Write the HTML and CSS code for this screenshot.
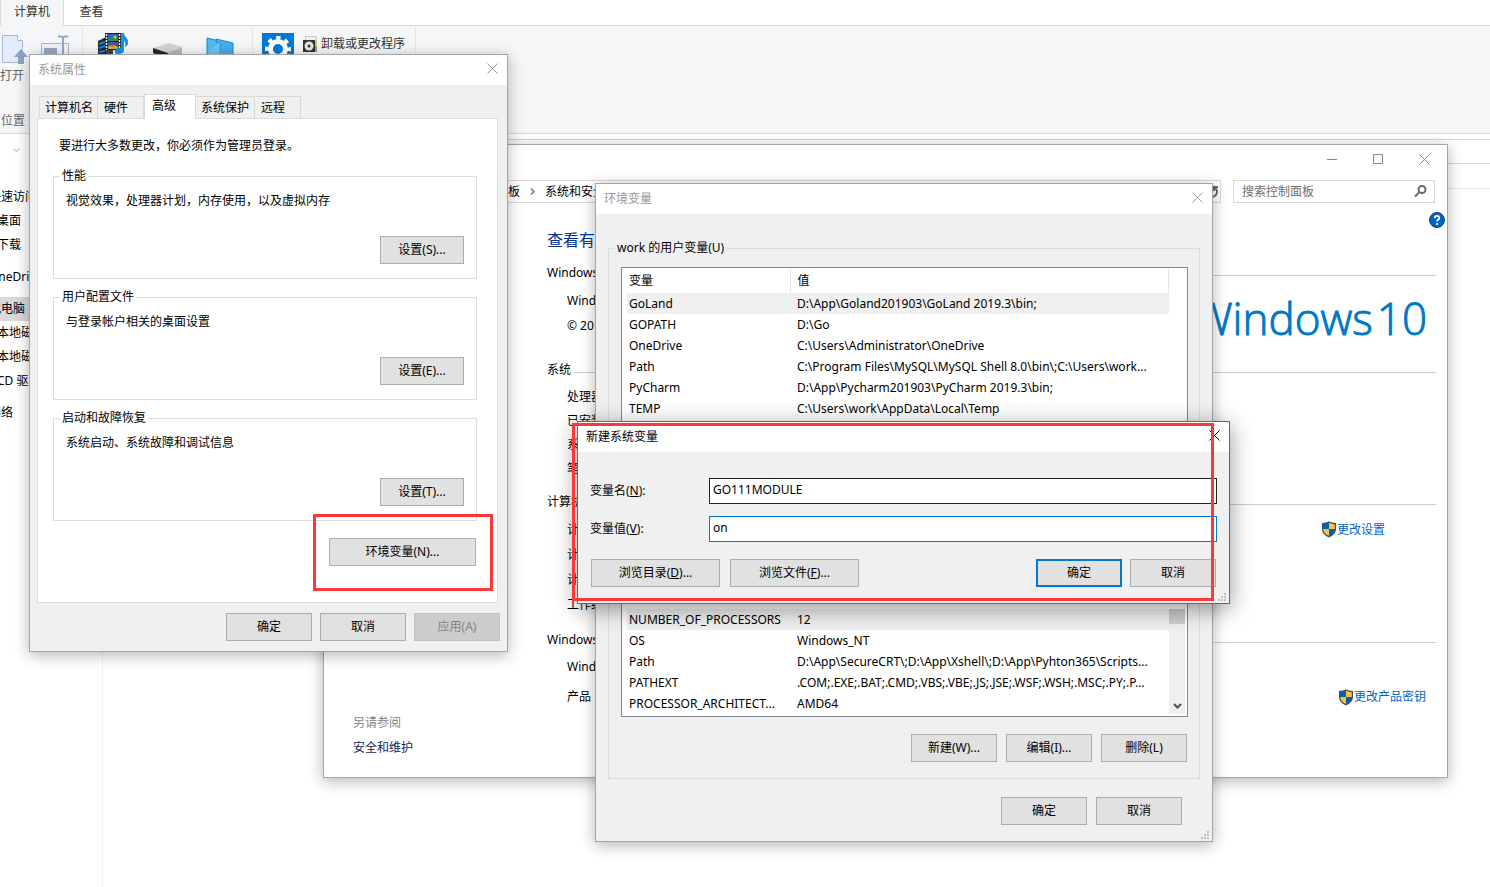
FILE: index.html
```html
<!DOCTYPE html>
<html lang="zh-CN">
<head>
<meta charset="utf-8">
<title>系统属性</title>
<link rel="stylesheet" href="styles.css">
</head>
<body>
<svg class="defs" aria-hidden="true">
  <symbol id="close" viewBox="0 0 11 11"><path d="M.5 .5l10 10M10.5 .5l-10 10" fill="none" stroke="currentColor"/></symbol>
  <symbol id="grip" viewBox="0 0 8 8"><path d="M6 0h2v2H6zM3 3h2v2H3zM6 3h2v2H6zM0 6h2v2H0zM3 6h2v2H3zM6 6h2v2H6z" fill="#bfbfbf"/></symbol>
  <symbol id="shield" viewBox="0 0 16 17">
    <path d="M8 .3C6 1.5 3.500 2 1 2v6c0 4 3 6.500 7 8.500 4-2 7-4.500 7-8.500V2C12.500 2 10 1.500 8 .3z" fill="#4a4f55"/>
    <path d="M8 1.600C6.300 2.600 4.300 3.100 2.200 3.200V8H8z" fill="#0063b8"/>
    <path d="M8 1.600c1.700 1 3.700 1.500 5.800 1.600V8H8z" fill="#ffc03c"/>
    <path d="M2.200 8H8v7.100C4.800 13.400 2.300 11.300 2.200 8z" fill="#ffc03c"/>
    <path d="M13.800 8H8v7.100c3.200-1.700 5.700-3.800 5.800-7.100z" fill="#0063b8"/>
  </symbol>
</svg>

<main class="desktop">
  <section class="explorer">
    <div class="ribbon-tabs">
      <button class="ribbon-tab ribbon-tab-on">计算机</button>
      <button class="ribbon-tab">查看</button>
    </div>
    <div class="ribbon">
      <div class="ribbon-group group-location">
        <div class="ribbon-icons">
          <svg width="28" height="34" viewBox="0 0 28 34">
            <path d="M2.500 3.500h15l5 5v22h-20z" fill="#e3ecf8" stroke="#a7b9d6"/><path d="M17.500 3.500v5h5" fill="#fff" stroke="#a7b9d6"/>
            <path d="M21 17l7 8h-4v7h-6v-7h-4z" fill="#8ea3c4"/>
          </svg>
          <svg width="30" height="34" viewBox="0 0 30 34">
            <path d="M1.500 11.500h27v14h-27z" fill="#edf2f9" stroke="#a9b8cf"/><path d="M4 16h13v6H4z" fill="#95a8c7"/>
            <path d="M18 4.500h3q2 0 2 2v23M28 4.500h-3q-2 0-2 2" fill="none" stroke="#95a8c7" stroke-width="2"/>
          </svg>
        </div>
        <span class="ribbon-label">打开</span>
        <span class="ribbon-title">位置</span>
      </div>
      <div class="ribbon-group group-network">
        <svg width="32" height="34" viewBox="0 0 32 34">
          <path d="M0 8l8-4v28l-8-3z" fill="#24292f"/><path d="M8 4h7v28H8z" fill="#3d454e"/>
          <path d="M1 11l6-2M1 15l6-2M1 19l6-1M1 23l6-1" stroke="#1683e0" stroke-width="2"/>
          <path d="M7 0h16v17H7z" fill="#1c1c1c"/><path d="M10 1h10v7H10z" fill="#2f67c9"/><path d="M10 9h10v7H10z" fill="#3a5ba8"/>
          <path d="M10 6l3-1 3-3 2 2 2 1v3H10z" fill="#2b8a57"/><circle cx="17" cy="4" r="1.500" fill="#f0b62c"/>
          <path d="M10 14l4-3 6 3v2H10z" fill="#c9b13c"/><circle cx="14" cy="12" r="1.500" fill="#d9442c"/>
          <path d="M8.500 1v16M21.500 1v16" stroke="#f2f2f2" stroke-width="1.500" stroke-dasharray="2 1"/>
          <path d="M23 0h3c0 4 5 5 4 11-1 2-2 3-3 3 1-4 0-5-1-6v9c0 3-3 4-6 4-5 0-4-6 1-6l2-.3z" fill="#1391e6"/>
        </svg>
        <svg width="32" height="34" viewBox="0 0 32 34"><path d="M1 15l16-5 13 4-14 6z" fill="#d4d4d4"/><path d="M1 15l15 5v7L1 20z" fill="#282828"/><path d="M16 20l14-6v8l-14 6z" fill="#b8b8b8"/></svg>
        <svg width="32" height="34" viewBox="0 0 32 34"><path d="M1 5l21 5v22L1 28z" fill="#55b9f2" stroke="#168bd1"/><path d="M10 6l17 4v22l-13-4V10l-4-1z" fill="#46aeea" stroke="#168bd1"/><path d="M1 19L14 9v19z" fill="#86d0fa" opacity=".5"/></svg>
      </div>
      <div class="ribbon-group group-system">
        <svg width="32" height="32" viewBox="0 0 32 32">
          <path d="M0 0h32v32H0z" fill="#0078d7"/>
          <circle cx="16" cy="16" r="11" fill="none" stroke="#fff" stroke-width="4" stroke-dasharray="4.320 4.320" stroke-dashoffset="2.160"/>
          <circle cx="16" cy="16" r="7.500" fill="none" stroke="#fff" stroke-width="5"/>
        </svg>
        <button class="ribbon-command">
          <svg width="16" height="18" viewBox="0 0 16 18"><path d="M3 1h11l1 4v12H4z" fill="#c8c7c0"/><path d="M4 2h9l1 3H4z" fill="#eee"/><path d="M12 6h3v5h-3z" fill="#f0b440"/><path d="M12 11h3v6h-3z" fill="#82aa6b"/><path d="M1 5h12v12H1z" fill="#333"/><circle cx="7" cy="11" r="4.500" fill="#e5e5e5"/><circle cx="7" cy="11" r="1.500" fill="#333"/></svg>
          卸载或更改程序
        </button>
      </div>
    </div>
    <div class="explorer-bar">
      <svg width="7" height="5" viewBox="0 0 7 5"><path d="M.5 .5l3 3 3-3" fill="none" stroke="#ccc" stroke-width="1.500"/></svg>
      <div class="explorer-address"></div>
    </div>
    <nav class="explorer-nav">
      <ul class="nav-list">
        <li>快速访问</li>
        <li class="nav-sub">桌面</li>
        <li class="nav-sub">下载</li>
        <li class="nav-gap">OneDri</li>
        <li class="nav-gap nav-on">此电脑</li>
        <li class="nav-sub">本地磁</li>
        <li class="nav-sub">本地磁</li>
        <li class="nav-sub">CD 驱</li>
        <li class="nav-gap">网络</li>
      </ul>
    </nav>
  </section>

  <section class="window system" aria-label="系统">
    <header class="system-bar">
      <button class="caption" aria-label="最小化"><svg width="11" height="11" viewBox="0 0 11 11"><path d="M0 5.500h10" stroke="#888"/></svg></button>
      <button class="caption" aria-label="最大化"><svg width="11" height="11" viewBox="0 0 11 11"><path d="M.5 .5h9v9h-9z" fill="none" stroke="#888"/></svg></button>
      <button class="caption" aria-label="关闭"><svg width="11" height="11"><use href="#close"/></svg></button>
    </header>
    <div class="system-address">
      <div class="crumbs">
        <span>板</span>
        <svg width="5" height="7" viewBox="0 0 5 7"><path d="M1 .5l3 3-3 3" fill="none" stroke="#777" stroke-width="1.500"/></svg>
        <span class="crumb-last">系统和安全</span>
        <svg width="14" height="14" viewBox="0 0 14 14"><path d="M9.500 2.500a5 5 0 1 1-5 0M9 6V2h4" fill="none" stroke="#666" stroke-width="2"/></svg>
      </div>
      <div class="search">
        <input type="search" placeholder="搜索控制面板" aria-label="搜索控制面板">
        <svg width="13" height="13" viewBox="0 0 13 13"><circle cx="8" cy="4.500" r="3.500" fill="none" stroke="#6a6a6a" stroke-width="2"/><path d="M5.500 7L1 11.500" stroke="#6a6a6a" stroke-width="2"/></svg>
      </div>
    </div>
    <div class="system-body">
      <aside class="system-side">
        <span class="muted">另请参阅</span>
        <a class="side-link" href="#">安全和维护</a>
      </aside>
      <article class="system-main">
        <div class="system-top">
          <h1>查看有</h1>
          <svg width="16" height="16" viewBox="0 0 16 16"><circle cx="8" cy="8" r="7.500" fill="#0063c4" stroke="#0b3d77"/><path d="M5.700 6.200C5.800 2.900 10.300 3.200 10.300 5.900 10.300 7.600 8.100 7.500 8.100 9.600M8.100 11v2" fill="none" stroke="#fff" stroke-width="1.800"/></svg>
        </div>
        <h2><span>Windows</span></h2>
        <div class="edition">
          <div class="edition-text"><p>Wind</p><p>© 20</p></div>
          <div class="logo"><span>Windows</span><span>10</span></div>
        </div>
        <h2><span>系统</span></h2>
        <div class="info info-system"><p>处理器</p><p>已安装</p><p>系</p><p>笔</p></div>
        <h2><span>计算机</span></h2>
        <div class="info info-name">
          <div><p>计</p><p>计</p><p>计</p><p>工作组</p></div>
          <a class="shield-link" href="#"><svg width="16" height="17"><use href="#shield"/></svg>更改设置</a>
        </div>
        <h2><span>Windows</span></h2>
        <div class="info info-activate"><p>Wind</p></div>
        <div class="info info-product">
          <p>产品</p>
          <a class="shield-link" href="#"><svg width="16" height="17"><use href="#shield"/></svg>更改产品密钥</a>
        </div>
      </article>
    </div>
  </section>

  <section class="window dialog props" aria-label="系统属性">
    <header class="title"><span>系统属性</span><button class="x" aria-label="关闭"><svg width="11" height="11"><use href="#close"/></svg></button></header>
    <div class="props-body">
      <div class="tabs" role="tablist">
        <button class="tab tab-a" role="tab">计算机名</button><button class="tab tab-b" role="tab">硬件</button><button class="tab tab-on" role="tab" aria-selected="true">高级</button><button class="tab tab-a" role="tab">系统保护</button><button class="tab tab-b" role="tab">远程</button>
      </div>
      <div class="panel" role="tabpanel">
        <p class="lead">要进行大多数更改，你必须作为管理员登录。</p>
        <fieldset class="frame"><legend>性能</legend><p>视觉效果，处理器计划，内存使用，以及虚拟内存</p><button class="btn">设置(S)...</button></fieldset>
        <fieldset class="frame"><legend>用户配置文件</legend><p>与登录帐户相关的桌面设置</p><button class="btn">设置(E)...</button></fieldset>
        <fieldset class="frame"><legend>启动和故障恢复</legend><p>系统启动、系统故障和调试信息</p><button class="btn">设置(T)...</button></fieldset>
        <button class="btn btn-env">环境变量(N)...</button>
      </div>
      <footer class="props-foot"><button class="btn">确定</button><button class="btn">取消</button><button class="btn" disabled>应用(A)</button></footer>
    </div>
  </section>

  <section class="window dialog env" aria-label="环境变量">
    <header class="title"><span>环境变量</span><button class="x" aria-label="关闭"><svg width="11" height="11"><use href="#close"/></svg></button></header>
    <div class="env-body">
      <fieldset class="vars vars-user">
        <legend>work 的用户变量(U)</legend>
        <div class="list list-user">
          <table>
            <thead><tr><th class="col-name">变量</th><th>值</th></tr></thead>
            <tbody>
              <tr class="row-on"><td>GoLand</td><td>D:\App\Goland201903\GoLand 2019.3\bin;</td></tr>
              <tr><td>GOPATH</td><td>D:\Go</td></tr>
              <tr><td>OneDrive</td><td>C:\Users\Administrator\OneDrive</td></tr>
              <tr><td>Path</td><td>C:\Program Files\MySQL\MySQL Shell 8.0\bin\;C:\Users\work...</td></tr>
              <tr><td>PyCharm</td><td>D:\App\Pycharm201903\PyCharm 2019.3\bin;</td></tr>
              <tr><td>TEMP</td><td>C:\Users\work\AppData\Local\Temp</td></tr>
            </tbody>
          </table>
        </div>
      </fieldset>
      <fieldset class="vars vars-system">
        <div class="list">
          <table>
            <colgroup><col class="col-name"><col></colgroup>
            <tbody>
              <tr class="row-on"><td>NUMBER_OF_PROCESSORS</td><td>12</td></tr>
              <tr><td>OS</td><td>Windows_NT</td></tr>
              <tr><td>Path</td><td>D:\App\SecureCRT\;D:\App\Xshell\;D:\App\Pyhton365\Scripts...</td></tr>
              <tr><td>PATHEXT</td><td>.COM;.EXE;.BAT;.CMD;.VBS;.VBE;.JS;.JSE;.WSF;.WSH;.MSC;.PY;.P...</td></tr>
              <tr><td>PROCESSOR_ARCHITECT...</td><td>AMD64</td></tr>
            </tbody>
          </table>
          <div class="scroll"><div class="thumb"></div><svg width="9" height="6" viewBox="0 0 9 6"><path d="M1 1l3.500 3.500L8 1" fill="none" stroke="#505050" stroke-width="2"/></svg></div>
        </div>
        <div class="actions"><button class="btn">新建(W)...</button><button class="btn">编辑(I)...</button><button class="btn">删除(L)</button></div>
      </fieldset>
      <footer class="env-foot"><button class="btn">确定</button><button class="btn">取消</button></footer>
    </div>
    <svg class="grip" width="8" height="8"><use href="#grip"/></svg>
  </section>

  <section class="window dialog newvar" aria-label="新建系统变量">
    <header class="title title-active"><span>新建系统变量</span><button class="x" aria-label="关闭"><svg width="11" height="11"><use href="#close"/></svg></button></header>
    <form class="newvar-body">
      <label for="var-name">变量名(<u>N</u>):</label><input id="var-name" type="text" value="GO111MODULE">
      <label for="var-value">变量值(<u>V</u>):</label><input id="var-value" class="focus" type="text" value="on">
      <div class="newvar-foot">
        <button type="button" class="btn btn-browse">浏览目录(<u>D</u>)...</button><button type="button" class="btn btn-browse">浏览文件(<u>F</u>)...</button>
        <button type="button" class="btn btn-default">确定</button><button type="button" class="btn">取消</button>
      </div>
    </form>
    <svg class="grip" width="8" height="8"><use href="#grip"/></svg>
  </section>

  <div class="mark mark-button"></div>
  <div class="mark mark-dialog"></div>
</main>
</body>
</html>
```
FILE: styles.css
```css
* { box-sizing: border-box; }
body {
  margin: 0;
  overflow: hidden;
  background: #fff;
  color: #000;
  font: 12px/16px "Noto Sans", "Noto Sans CJK SC", sans-serif;
}
button, input { font: inherit; color: inherit; }
button { padding: 0; border: 0; background: none; white-space: nowrap; }
p, h1, h2, ul { margin: 0; padding: 0; font-size: inherit; font-weight: normal; white-space: nowrap; }
ul { list-style: none; }
svg { display: block; flex: none; }
a { text-decoration: none; }
.defs { position: absolute; width: 0; height: 0; }
.desktop { position: relative; min-height: 100vh; overflow: hidden; }

/* File explorer in the background */
.explorer { display: flex; flex-direction: column; min-height: 100vh; }
.ribbon-tabs { display: flex; border-bottom: 1px solid #dadbdc; height: 26px; }
.ribbon-tab { width: 55px; padding-bottom: 2px; color: #333; }
.ribbon-tab-on { width: 64px; margin-bottom: -1px; background: #f5f6f7; border: 1px solid #dadbdc; border-width: 0 1px; }
.ribbon { display: flex; height: 108px; padding: 2px 0 4px; background: #f5f6f7; border-bottom: 1px solid #dadbdc; }
.ribbon-group { border-right: 1px solid #e2e3e4; color: #666; }
.group-location { display: flex; flex-direction: column; width: 83px; padding-top: 4px; }
.ribbon-icons { display: flex; gap: 12px; height: 36px; }
.ribbon-label { padding-bottom: 29px; }
.ribbon-title { padding-left: 1px; }
.group-network { display: flex; gap: 22px; width: 170px; padding: 5px 0 0 15px; }
.group-system { display: flex; gap: 8px; width: 163px; padding: 5px 0 0 9px; }
.ribbon-command { display: flex; align-items: center; align-self: flex-start; gap: 3px; height: 22px; color: #333; }
.explorer-bar { display: flex; align-items: flex-start; gap: 20px; height: 55px; padding-left: 13px; }
.explorer-bar svg { margin-top: 14px; }
.explorer-address { flex: 1; height: 55px; margin-top: 0; padding-top: 5px; border-bottom: 1px solid #e5e5e5; }
.explorer-address::before { content: ""; display: block; height: 23px; border: 1px solid #d9d9d9; border-width: 1px 0; }
.explorer-nav { flex: 1; width: 103px; border-right: 1px solid #f0f0f0; overflow: hidden; }
.nav-list { display: flex; flex-direction: column; margin: -4px 0 0 -11px; }
.nav-list li { line-height: 24px; }
.nav-list .nav-sub { padding-left: 8px; }
.nav-list .nav-gap { margin-top: 8px; }
.nav-list .nav-on { background: #d9d9d9; }

/* Windows */
.window { position: absolute; background: #fff; border: 1px solid #a5a5a5; box-shadow: 0 3px 14px rgba(0, 0, 0, .3); }
.dialog { background: #f0f0f0; }
.title { display: flex; align-items: center; justify-content: space-between; height: 30px; padding: 0 9px 0 8px; background: #fff; color: #999; }
.title-active { color: #000; }
.x { padding-bottom: 3px; }
.btn { width: 86px; height: 28px; background: #e1e1e1; border: 1px solid #adadad; }
.btn:disabled { background: #ccc; border-color: #bfbfbf; color: #838383; }
.grip { position: absolute; right: 3px; bottom: 2px; }

/* System window */
.system { top: 144px; left: 323px; right: 42px; display: flex; flex-direction: column; }
.system-bar { display: flex; justify-content: flex-end; height: 35px; }
.caption { display: flex; justify-content: center; align-items: center; width: 46px; height: 28px; color: #888; }
.system-address { display: flex; gap: 12px; padding-right: 12px; }
.crumbs { display: flex; flex: 1; align-items: center; gap: 10px; height: 23px; margin-left: 40px; padding: 0 1px 0 143px; border: 1px solid #d9d9d9; }
.crumb-last { flex: 1; }
.search { display: flex; align-items: center; width: 202px; height: 23px; padding: 0 7px 0 8px; border: 1px solid #d9d9d9; }
.search input { flex: 1; min-width: 0; padding: 0; border: 0; outline: 0; background: none; }
.search input::placeholder { color: #6d6d6d; opacity: 1; }
.system-body { display: flex; padding-bottom: 20px; }
.system-side { display: flex; flex-direction: column; justify-content: flex-end; gap: 9px; width: 223px; padding: 0 0 1px 29px; }
.muted { color: #838383; }
.side-link { color: #151c55; }
.system-main { flex: 1; padding-right: 11px; }
.system-top { display: flex; justify-content: space-between; height: 62px; margin-right: -9px; padding-top: 9px; }
.system-top h1 { padding-top: 16px; color: #039; font-size: 16px; line-height: 24px; }
h2 { display: flex; gap: 3px; line-height: 16px; }
h2::after { content: ""; flex: 1; height: 1px; margin-top: 10px; background: #ccc; }
.edition { display: flex; justify-content: space-between; height: 81px; padding: 7px 9px 0 20px; }
.edition-text { line-height: 25px; }
.logo {
  display: flex;
  gap: 4px;
  padding-top: 6px;
  color: #0078c8;
  font-family: "Open Sans", sans-serif;
  font-size: 44px;
  font-weight: 300;
  line-height: 48px;
  -webkit-text-stroke: 1px #0078c8;
}
.info { display: flex; justify-content: space-between; padding-left: 20px; }
.info-system { flex-direction: column; padding-top: 7px; padding-bottom: 13px; line-height: 24px; }
.info-name { padding-top: 7px; padding-right: 51px; padding-bottom: 15px; line-height: 25px; }
.info-activate { padding-top: 11px; }
.info-product { padding: 14px 10px 0 20px; margin-bottom: 52px; }
.shield-link { display: flex; align-items: center; align-self: flex-start; height: 24px; color: #06c; }
.info-product .shield-link { height: 16px; }

/* System properties */
.props { top: 54px; left: 29px; width: 479px; }
.props-body { padding: 9px 9px 10px 7px; }
.tabs { display: flex; align-items: flex-end; padding-left: 2px; }
.tab { height: 22px; background: #f0f0f0; border: 1px solid #d9d9d9; border-bottom: 0; border-left-width: 0; text-align: left; }
.tab:first-child { border-left-width: 1px; }
.tab-a { width: 59px; padding-left: 5px; }
.tab-b { width: 46px; padding-left: 6px; }
.tab-on { width: 52px; height: 25px; margin-bottom: -1px; padding: 0 0 2px 7px; background: #fff; border-left-width: 1px; }
.panel { display: flex; flex-direction: column; gap: 10px; padding: 19px 20px 36px 15px; background: #fff; border: 1px solid #dcdcdc; }
.lead { padding: 0 0 4px 6px; }
fieldset { min-width: 0; margin: 0; border: 1px solid #dcdcdc; }
legend { padding: 0 2px; line-height: 16px; }
.frame { display: flex; flex-direction: column; padding: 9px 12px 14px; }
.frame legend { margin-left: -6px; }
.frame .btn { width: 84px; margin-top: 27px; align-self: flex-end; }
.btn.btn-env { width: 147px; margin: 7px 1px 0 0; align-self: flex-end; }
.props-foot { display: flex; justify-content: flex-end; gap: 8px; padding-top: 10px; margin-right: -2px; }

/* Environment variables */
.env { top: 183px; left: 595px; width: 618px; }
.env-body { padding: 26px 12px 16px; }
.vars { padding: 11px 11px 16px 12px; }
.vars-user { padding-bottom: 60px; }
.vars-system { margin-top: 84px; }
.vars legend { margin-left: -6px; }
.list { display: flex; justify-content: space-between; padding: 1px 2px 2px 5px; background: #fff; border: 1px solid #828790; }
.list-user { padding-bottom: 10px; }
.vars-system .list { padding-top: 21px; }
table { width: 542px; border-collapse: collapse; table-layout: fixed; }
th, td { height: 21px; padding: 0 0 0 7px; text-align: left; font-weight: normal; white-space: nowrap; }
th { height: 24px; border-right: 1px solid #e5e5e5; }
.col-name { width: 163px; }
th:first-child, td:first-child { padding-left: 2px; }
.row-on { background: #f0f0f0; }
.scroll { display: flex; flex-direction: column; justify-content: space-between; align-items: center; width: 16px; padding-bottom: 5px; background: #f0f0f0; }
.thumb { width: 100%; height: 15px; background: #cdcdcd; }
.vars-system .scroll { margin-top: 0; }
.actions { display: flex; justify-content: flex-end; gap: 9px; padding: 17px 1px 0 0; }
.env-foot { display: flex; justify-content: flex-end; gap: 9px; padding: 18px 18px 0 0; }

/* New system variable */
.newvar { top: 421px; left: 577px; width: 653px; border-color: #666; box-shadow: 0 5px 22px rgba(0, 0, 0, .42); }
.newvar-body { display: grid; grid-template-columns: 119px 1fr; align-items: center; gap: 12px 0; padding: 26px 12px 16px; }
.newvar-body input { height: 26px; padding: 0 3px 3px; border: 1px solid #222; border-radius: 0; outline: 0; background: #fff; }
.newvar-body input.focus { border-color: #0078d7; }
.newvar-foot { display: flex; grid-column: 1 / -1; gap: 8px; padding: 5px 1px 0; }
.btn.btn-browse { width: 129px; margin-right: 2px; }
.btn.btn-default { margin-left: auto; border: 2px solid #0078d7; }

/* Red highlight boxes */
.mark { position: absolute; border: 3px solid #fc3939; pointer-events: none; }
.mark-button { top: 514px; left: 313px; width: 180px; height: 77px; }
.mark-dialog { top: 423px; left: 572px; width: 642px; height: 178px; }
```
